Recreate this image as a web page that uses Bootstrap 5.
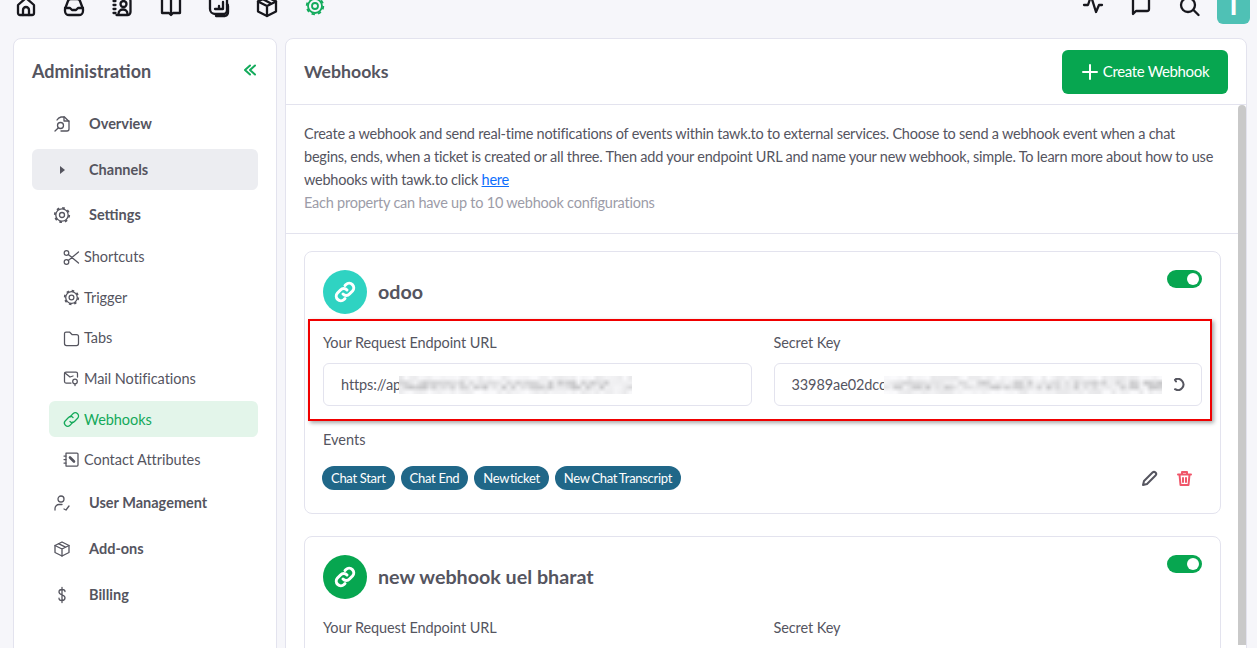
<!DOCTYPE html>
<html lang="en">
<head>
  <meta charset="UTF-8"/>
  <meta name="viewport" content="width=device-width, initial-scale=1.0"/>
  <title>Webhooks</title>
  <link href="https://cdn.jsdelivr.net/npm/bootstrap@5.3.3/dist/css/bootstrap.min.css" rel="stylesheet">
  <style>
    html, body { height: 100%; overflow: hidden; }
    body { background: #f6f6fa; font-family: Lato, sans-serif; color: #55555f; font-size: 14px; }
    svg { fill: none; stroke: currentColor; stroke-width: 2; stroke-linecap: round; stroke-linejoin: round; flex: none; }
    .topbar { height: 38px; padding: 0 7px 0 15px; align-items: flex-end; }
    .topbar svg { color: #17171d; stroke-width: 2.3; }
    .top-left { gap: 26px; padding-bottom: 20px; }
    .topbar .gear-ico { color: #14ab5c; stroke-width: 1.8; }
    .top-right { gap: 17px; align-items: flex-end; }
    .top-right .ico-wrap { padding-bottom: 20px; display: flex; gap: 26px; }
    .avatar-tile { width: 33px; height: 34px; margin-bottom: 14px; background: #4fc1b5; color: #fff; border-radius: 0 0 6px 6px; font-size: 25px; font-weight: 900; line-height: 30px; text-align: center; overflow: hidden; }
    .layout { padding: 0 10px 0 13px; gap: 8px; height: 610px; }
    .side-panel { width: 264px; height: 640px; background: #fff; border: 1px solid #e3e3ee; border-radius: 8px; padding: 0 18px; flex: none; }
    .side-title { height: 64px; font-size: 18px; font-weight: 700; color: #55555f; }
    .side-title svg { color: #14ab5c; margin-top: -3px; margin-right: 2px; }
    .nav-main, .nav-sub { display: flex; align-items: center; color: #55555f; text-decoration: none; }
    .nav-main { height: 41px; margin-bottom: 4px; padding-left: 21px; font-weight: 700; font-size: 14.5px; border-radius: 6px; }
    .nav-main:first-of-type { margin-bottom: 5px; }
    .nav-sub ~ .nav-main { margin-bottom: 5px; }
    .nav-main svg { width: 18px; height: 18px; margin-right: 18px; stroke-width: 1.3; }
    .nav-main.open { background: #ecedf1; }
    .nav-sub { height: 36px; margin: 0 0 4.6px 17px; padding-left: 14px; font-size: 14.5px; letter-spacing: -.05px; border-radius: 6px; }
    .nav-sub svg { width: 17px; height: 17px; margin-right: 4px; stroke-width: 1.25; }
    .nav-sub.current { background: #e3f5ea; color: #14a95a; }
    .main-panel { flex: 1; min-width: 0; height: 640px; background: #fff; border: 1px solid #e3e3ee; border-radius: 8px; overflow: hidden; }
    .main-head { height: 66px; padding: 0 18px; border-bottom: 1px solid #e3e3ee; }
    .main-head h1 { font-size: 17.7px; font-weight: 700; margin: 0; color: #55555f; font-family: Lato, sans-serif; }
    .btn-create { width: 166px; height: 44px; background: #07a650; color: #fff; font-size: 15px; border-radius: 6px; border: 0; padding: 0; letter-spacing: -.35px; }
    .btn-create:hover { background: #07a650; color: #fff; }
    .fake-scroll { width: 8px; height: 540px; background: #c9c9c9; border-radius: 4px 4px 0 0; flex: none; }
    .intro { padding: 17px 17px 19px 18px; border-bottom: 1px solid #e3e3ee; line-height: 23px; font-size: 14.5px; letter-spacing: -.23px; }
    .intro a { color: #0d6efd; }
    .intro .hint { color: #9c9ca8; }
    .hook-list { padding: 17px 17px 0 18px; }
    .hook { position: relative; border: 1px solid #e3e3ee; border-radius: 8px; padding: 18px 18px 0; height: 263px; margin-bottom: 22px; }
    .hook-icon { width: 44px; height: 44px; border-radius: 50%; color: #fff; }
    .hook-icon svg { width: 24px; height: 24px; stroke-width: 3; }
    .teal { background: #2fd3c2; }
    .green { background: #07a650; }
    .hook-name { font-size: 19.7px; font-weight: 700; color: #55555f; margin-left: 11px; }
    .hook-top { height: 44px; margin-bottom: 19px; }
    .switch-fake { width: 35px; height: 18px; border-radius: 9px; background: #07a650; position: relative; margin-left: auto; align-self: flex-start; }
    .switch-fake::after { content: ""; position: absolute; right: 3px; top: 3px; width: 12px; height: 12px; border-radius: 50%; background: #fff; }
    .field-label { font-size: 14.5px; line-height: 20px; margin-bottom: 10px; letter-spacing: -.1px; }
    .fields { gap: 22px; }
    .field { flex: 1; min-width: 0; }
    .fake-input { height: 43px; border: 1px solid #e3e3ee; border-radius: 6px; padding: 0 17px 0 17px; font-size: 14.5px; letter-spacing: -.1px; }
    .smudge { display: block; height: 18px; flex: none; margin-left: -2px; filter: blur(.4px); }
    .smudge-a { width: 233px; }
    .smudge-b { width: 278px; }
    .events-title { font-size: 14.5px; line-height: 20px; margin: 24px 0 16px; }
    .evt { background: #206788; color: #fff; border-radius: 12px; height: 24px; line-height: 24px; padding: 0 9px; font-size: 13px; letter-spacing: -.3px; }
    .evt-tight { word-spacing: -2px; }
    .evt-long { letter-spacing: -.3px; word-spacing: -1px; }
    .evt-row { gap: 6px; margin-left: -1px; }
    .evt-actions { gap: 18px; margin-left: auto; margin-right: 9px; }
    .red-box { position: absolute; left: 3px; top: 67px; width: 904px; height: 102px; border: 2px solid #f00000; box-shadow: 2px 2px 4px rgba(0,0,0,.35); pointer-events: none; }
  </style>
</head>
<body>

<div class="topbar d-flex justify-content-between">
  <div class="top-left d-flex">
    <svg width="22" height="22" viewBox="0 0 22 22"><path d="M3 17V9l8-7 8 7v8a2 2 0 0 1-2 2H5a2 2 0 0 1-2-2z"/><path d="M8 19v-5a3 3 0 0 1 6 0v5"/></svg>
    <svg width="22" height="22" viewBox="0 0 22 22"><path d="M2 13l3-8a3 3 0 0 1 3-2h6a3 3 0 0 1 3 2l3 8v2a4 4 0 0 1-4 4H6a4 4 0 0 1-4-4z"/><path d="M2 12h5l2 2h4l2-2h5"/></svg>
    <svg width="23" height="22" viewBox="0 0 22 22"><path d="M5 2h11a3 3 0 0 1 3 3v11a3 3 0 0 1-3 3H5"/><circle cx="12" cy="8" r="3"/><path d="M7 18c0-6 9-6 9 0M2 5h2M2 9h2M2 13h2M2 17h2"/></svg>
    <svg width="22" height="22" viewBox="0 0 22 22"><path d="M2 1v16h7l2 2 2-2h7V1"/><path d="M11 1v17"/></svg>
    <svg width="22" height="22" viewBox="0 0 22 22"><path d="M2 3v10a5 5 0 0 0 5 5h8a4 4 0 0 0 4-4V3"/><path d="M19 8a2 2 0 0 1 1 2v6a4 4 0 0 1-3 4H8"/><path d="M7 13h8V6M11 13v-3"/></svg>
    <svg width="22" height="22" viewBox="0 0 22 22"><path d="M11 1l9 4.500v10L11 20l-9-4.500v-10z"/><path d="M2 5.500L11 10l9-4.500M11 10v10M6.500 3l9 4.700"/></svg>
    <svg class="gear-ico" width="22" height="22" viewBox="0 0 22 22"><circle cx="11" cy="10" r="7"/><circle cx="11" cy="10" r="8.300" stroke-dasharray="3.400 3.120" stroke-linecap="butt"/><circle cx="11" cy="10" r="3"/></svg>
  </div>
  <div class="top-right d-flex">
    <div class="ico-wrap">
      <svg width="22" height="22" viewBox="0 0 22 22"><path d="M2 9h4l3-9 5 16 3-7h3"/></svg>
      <svg width="22" height="22" viewBox="0 0 22 22"><path d="M3 1v17l3-3h11a2 2 0 0 0 2-2V1"/></svg>
      <svg width="22" height="22" viewBox="0 0 22 22"><circle cx="10" cy="9" r="7"/><path d="M15.500 14l5 5"/></svg>
    </div>
    <div class="avatar-tile">T</div>
  </div>
</div>

<div class="layout d-flex">
  <aside class="side-panel">
    <div class="side-title d-flex align-items-center justify-content-between">
      <span>Administration</span>
      <svg width="12" height="12" viewBox="0 0 12 12" stroke-width="1.200"><path d="M6 1.500L1 6l5 4.500M11 1.500L6 6l5 4.500"/></svg>
    </div>
    <a class="nav-main" href="#"><svg viewBox="0 0 18 18"><path d="M4 5a6 6 0 0 1 4-3h3.500L16 6.500V14a2 2 0 0 1-2 2H8"/><path d="M11 2v4h5"/><circle cx="7.500" cy="10.500" r="3"/><path d="M5.200 13L2 16"/></svg>Overview</a>
    <a class="nav-main open" href="#"><svg viewBox="0 0 18 18" style="fill:currentColor;stroke:none"><path d="M7 5l5 4-5 4z"/></svg>Channels</a>
    <a class="nav-main" href="#"><svg viewBox="0 0 18 18"><circle cx="9" cy="9" r="6.200"/><circle cx="9" cy="9" r="7.200" stroke-width="1.800" stroke-dasharray="2.600 3.055" stroke-linecap="butt"/><circle cx="9" cy="9" r="2.500"/></svg>Settings</a>
    <a class="nav-sub" href="#"><svg viewBox="0 0 17 17"><circle cx="3.500" cy="4" r="2.300"/><circle cx="3.500" cy="13" r="2.300"/><path d="M5.300 5.400L15.500 14M5.300 11.600L15.500 3"/></svg>Shortcuts</a>
    <a class="nav-sub" href="#"><svg viewBox="0 0 17 17"><circle cx="8.500" cy="8.500" r="5.800"/><circle cx="8.500" cy="8.500" r="6.800" stroke-width="1.700" stroke-dasharray="2.500 2.840" stroke-linecap="butt"/><circle cx="8.500" cy="8.500" r="2.400"/></svg>Trigger</a>
    <a class="nav-sub" href="#"><svg viewBox="0 0 17 17"><path d="M1.500 3.500A1.500 1.500 0 0 1 3 2h3.500l2.500 2.500h4.500A2 2 0 0 1 15.500 6.500v7a2 2 0 0 1-2 2H3.500a2 2 0 0 1-2-2z"/></svg>Tabs</a>
    <a class="nav-sub" href="#"><svg viewBox="0 0 17 17"><path d="M8 13H3a1.500 1.500 0 0 1-1.500-1.500v-8A1.500 1.500 0 0 1 3 2h10a1.500 1.500 0 0 1 1.500 1.500V7"/><path d="M2 3l5 4 3-1"/><circle cx="12" cy="11.500" r="2.300"/><path d="M12 14v1.500"/></svg>Mail Notifications</a>
    <a class="nav-sub current" href="#"><svg viewBox="0 0 17 17"><path d="M7 6l3-3.300a3.200 3.200 0 0 1 4.600 4.600L11.500 10.500a3.200 3.200 0 0 1-4.500 0"/><path d="M10 11l-3 3.300A3.200 3.200 0 0 1 2.400 9.700L5.500 6.500a3.200 3.200 0 0 1 4.500 0"/></svg>Webhooks</a>
    <a class="nav-sub" href="#"><svg viewBox="0 0 17 17"><path d="M3 2h11a1 1 0 0 1 1 1v11a1 1 0 0 1-1 1H3z"/><path d="M1 5h2M1 8.500h2M1 12h2"/><path d="M7 6.500l4 4" stroke-width="2.600"/></svg>Contact Attributes</a>
    <a class="nav-main" href="#"><svg viewBox="0 0 18 18"><circle cx="8" cy="5" r="3"/><path d="M2 16v-1.500a4 4 0 0 1 4-4h3M11 15l2 1 3-4"/></svg>User Management</a>
    <a class="nav-main" href="#"><svg viewBox="0 0 18 18"><path d="M9 2l7 3.500v7L9 16l-7-3.500v-7z"/><path d="M2 5.500L9 9l7-3.500M9 9v7M5.500 3.700l7 3.500"/></svg>Add-ons</a>
    <a class="nav-main" href="#"><svg viewBox="0 0 18 18"><path d="M12 5.500C12 4 10.500 3.500 9 3.500S6 4.300 6 6s1.500 2.300 3 2.800 3 1.200 3 3-1.500 2.700-3 2.700-3-.8-3-2.300M9 1.500v15"/></svg>Billing</a>
  </aside>

  <main class="main-panel">
    <div class="main-head d-flex align-items-center justify-content-between">
      <h1>Webhooks</h1>
      <button class="btn btn-create d-flex align-items-center justify-content-center gap-1">
        <svg width="18" height="18" viewBox="0 0 18 18" stroke-width="1.600"><path d="M9 2v14M2 9h14"/></svg>Create Webhook
      </button>
    </div>
    <div class="d-flex">
      <div class="flex-grow-1" style="min-width:0">
        <div class="intro">
          Create a webhook and send real-time notifications of events within tawk.to to external services. Choose to send a webhook event when a chat begins, ends, when a ticket is created or all three. Then add your endpoint URL and name your new webhook, simple. To learn more about how to use webhooks with tawk.to click <a href="#">here</a><br>
          <span class="hint">Each property can have up to 10 webhook configurations</span>
        </div>
        <div class="hook-list">
          <div class="hook">
            <div class="hook-top d-flex align-items-center">
              <div class="hook-icon teal d-flex align-items-center justify-content-center"><svg viewBox="0 0 24 24"><path d="M10 14a4.500 4.500 0 0 0 6.500 0l3-3a4.600 4.600 0 0 0-6.500-6.500l-1 1"/><path d="M14 10a4.500 4.500 0 0 0-6.500 0l-3 3a4.600 4.600 0 0 0 6.500 6.500l1-1"/></svg></div>
              <span class="hook-name">odoo</span>
              <span class="switch-fake"></span>
            </div>
            <div class="fields d-flex">
              <div class="field">
                <div class="field-label">Your Request Endpoint URL</div>
                <div class="fake-input d-flex align-items-center"><span>https://ap</span><canvas class="smudge smudge-a" width="50" height="4"></canvas></div>
              </div>
              <div class="field">
                <div class="field-label">Secret Key</div>
                <div class="fake-input d-flex align-items-center"><span>33989ae02dcc</span><canvas class="smudge smudge-b" width="60" height="4"></canvas><svg class="ms-auto" width="13" height="13" viewBox="0 0 13 13" stroke-width="1.200" style="margin-right:-1px"><path d="M3 1.800a5.500 5.500 0 1 1 0 9.400M4 1l-1 1 1 1.500"/></svg></div>
              </div>
            </div>
            <div class="events-title">Events</div>
            <div class="evt-row d-flex align-items-center">
              <span class="evt">Chat Start</span>
              <span class="evt">Chat End</span>
              <span class="evt evt-tight">New ticket</span>
              <span class="evt evt-long">New Chat Transcript</span>
              <div class="evt-actions d-flex">
                <svg width="17" height="17" viewBox="0 0 17 17" stroke-width="1.200"><path d="M2 15l1-4 8.500-8.500a2 2 0 0 1 3 3L6 14z"/></svg>
                <svg width="17" height="17" viewBox="0 0 17 17" style="color:#f0566a" stroke-width="1.300"><path d="M2 4.500h13M6 4.500V2h5v2.500M3.500 4.500l1 10.500h8l1-10.500M7 8v4M10 8v4"/></svg>
              </div>
            </div>
            <div class="red-box"></div>
          </div>
          <div class="hook">
            <div class="hook-top d-flex align-items-center">
              <div class="hook-icon green d-flex align-items-center justify-content-center"><svg viewBox="0 0 24 24"><path d="M10 14a4.500 4.500 0 0 0 6.500 0l3-3a4.600 4.600 0 0 0-6.500-6.500l-1 1"/><path d="M14 10a4.500 4.500 0 0 0-6.500 0l-3 3a4.600 4.600 0 0 0 6.500 6.500l1-1"/></svg></div>
              <span class="hook-name">new webhook uel bharat</span>
              <span class="switch-fake"></span>
            </div>
            <div class="fields d-flex">
              <div class="field"><div class="field-label">Your Request Endpoint URL</div></div>
              <div class="field"><div class="field-label">Secret Key</div></div>
            </div>
          </div>
        </div>
      </div>
      <div class="fake-scroll"></div>
    </div>
  </main>
</div>

<script src="https://cdn.jsdelivr.net/npm/bootstrap@5.3.3/dist/js/bootstrap.bundle.min.js"></script>
<script>
  // pixelated (blurred out) parts of the url and the secret key
  let seed = 7;
  function rnd() {
    seed = (seed * 16807) % 2147483647;
    return seed / 2147483647;
  }
  document.querySelectorAll('.smudge').forEach(cv => {
    const ctx = cv.getContext('2d');
    for (let y = 0; y < cv.height; y++) {
      const mid = y === 1 || y === 2;
      for (let x = 0; x < cv.width; x++) {
        const base = mid ? 200 + rnd() * 45 : 232 + rnd() * 20;
        const g = Math.round(base);
        ctx.fillStyle = `rgb(${g},${g},${g + 2})`;
        ctx.fillRect(x, y, 1, 1);
      }
    }
  });
</script>
</body>
</html>
